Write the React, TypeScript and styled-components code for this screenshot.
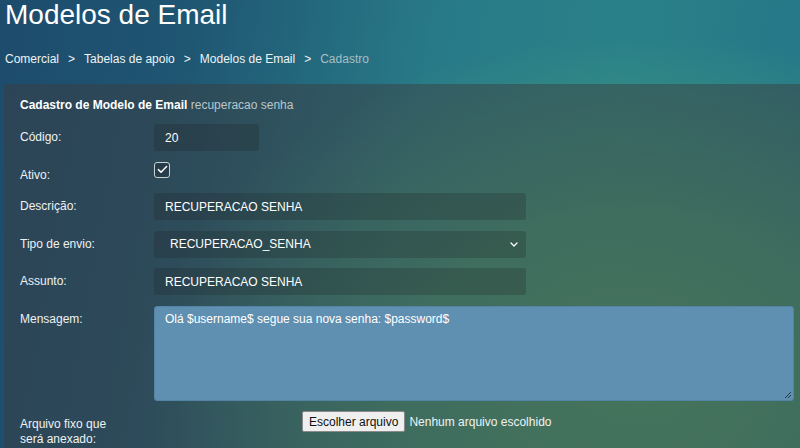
import styled, { createGlobalStyle } from "styled-components";

const GlobalStyle = createGlobalStyle`
  html, body {
    margin: 0;
    padding: 0;
    height: 100%;
    overflow: hidden;
  }
  body {
    font-family: "Liberation Sans", Arial, sans-serif;
    font-size: 12px;
    color: #eef2f3;
    background:
      radial-gradient(ellipse 62% 78% at 80% 86%, rgba(78, 168, 118, 1) 0%, rgba(78, 168, 118, 0.65) 50%, rgba(78, 168, 118, 0) 100%),
      linear-gradient(100deg, #1d4b6c 0%, #1f5672 22%, #287a88 50%, #2a8088 72%, #247689 100%);
  }
  #root {
    min-height: 100vh;
  }
`;

const Page = styled.div`
  padding: 0 0 0 4px;
`;

const Title = styled.h1`
  margin: 0 0 0 1px;
  font-size: 28px;
  font-weight: 400;
  line-height: 30px;
  color: #ffffff;
`;

const Breadcrumb = styled.nav`
  display: flex;
  align-items: center;
  margin: 22px 0 0 1px;
  line-height: 14px;
  font-size: 12px;
`;

const Crumb = styled.span<{ $current?: boolean }>`
  color: ${({ $current }) => ($current ? "#a7bfc4" : "#eef3f4")};
`;

const Sep = styled.span`
  margin: 0 9px;
  color: #eef3f4;
`;

const Panel = styled.section`
  margin-top: 18px;
  padding: 14px 6px 20px 16px;
  background: rgba(60, 60, 62, 0.48);
  min-height: 400px;
`;

const PanelHeader = styled.div`
  line-height: 14px;
  margin-bottom: 12px;
  strong {
    font-weight: 700;
    color: #ffffff;
  }
  span {
    color: #b9c7cb;
  }
`;

const Form = styled.div`
  display: grid;
  grid-template-columns: 134px 1fr;
  row-gap: 10.5px;
  align-items: start;
`;

const Label = styled.label`
  padding: 6px 0 0;
  line-height: 15px;
  color: #eef2f3;
`;

const Field = styled.div`
  display: flex;
  align-items: flex-start;
`;

const TextInput = styled.input<{ $width: number }>`
  box-sizing: border-box;
  width: ${({ $width }) => $width}px;
  height: 27px;
  padding: 0 11px;
  border: none;
  border-radius: 3px;
  background: rgba(30, 32, 32, 0.24);
  color: #ffffff;
  font-family: inherit;
  font-size: 12px;
  outline: none;
`;

const SelectBox = styled.div`
  box-sizing: border-box;
  width: 372px;
  height: 27px;
  padding: 0 8px 0 16px;
  border-radius: 3px;
  background: rgba(30, 32, 32, 0.24);
  display: flex;
  align-items: center;
  justify-content: space-between;
  color: #ffffff;
`;

const CheckBox = styled.span`
  box-sizing: border-box;
  width: 16px;
  height: 16px;
  border: 1px solid #c9d3d6;
  border-radius: 3px;
  background: rgba(30, 40, 45, 0.35);
  display: flex;
  align-items: center;
  justify-content: center;
`;

const TextArea = styled.div`
  position: relative;
  box-sizing: border-box;
  flex: 1;
  height: 95px;
  padding: 5px 10px;
  line-height: 14px;
  background: #5f8fb1;
  border: 1px solid #5383a5;
  border-radius: 3px;
  color: #ffffff;
`;

const Grip = styled.svg`
  position: absolute;
  right: 1px;
  bottom: 1px;
`;

const FileField = styled.div`
  display: flex;
  align-items: center;
  gap: 4px;
  padding-left: 148px;
`;

const FileButton = styled.button`
  height: 21px;
  padding: 0 6px;
  border: 1px solid #8a8a8a;
  border-radius: 2px;
  background: #efefef;
  color: #111111;
  font-family: inherit;
  font-size: 12px;
`;

const FileName = styled.span`
  color: #eef2f3;
`;

export default function App() {
  return (
    <>
      <GlobalStyle />
      <Page>
        <Title>Modelos de Email</Title>
        <Breadcrumb>
          <Crumb>Comercial</Crumb>
          <Sep>&gt;</Sep>
          <Crumb>Tabelas de apoio</Crumb>
          <Sep>&gt;</Sep>
          <Crumb>Modelos de Email</Crumb>
          <Sep>&gt;</Sep>
          <Crumb $current>Cadastro</Crumb>
        </Breadcrumb>
        <Panel>
          <PanelHeader>
            <strong>Cadastro de Modelo de Email</strong> <span>recuperacao senha</span>
          </PanelHeader>
          <Form>
            <Label>Código:</Label>
            <Field>
              <TextInput $width={105} defaultValue="20" />
            </Field>

            <Label>Ativo:</Label>
            <Field>
              <CheckBox>
                <svg width="11" height="9" viewBox="0 0 11 9">
                  <path d="M1.4 4.6 L4 7.2 L9.6 1.5" fill="none" stroke="#ffffff" strokeWidth="1.5" strokeLinecap="round" strokeLinejoin="round" />
                </svg>
              </CheckBox>
            </Field>

            <Label>Descrição:</Label>
            <Field>
              <TextInput $width={372} defaultValue="RECUPERACAO SENHA" />
            </Field>

            <Label>Tipo de envio:</Label>
            <Field>
              <SelectBox>
                <span>RECUPERACAO_SENHA</span>
                <svg width="8" height="5" viewBox="0 0 8 5">
                  <path d="M1 1 L4 4 L7 1" fill="none" stroke="#ffffff" strokeWidth="1.3" strokeLinecap="round" strokeLinejoin="round" />
                </svg>
              </SelectBox>
            </Field>

            <Label>Assunto:</Label>
            <Field>
              <TextInput $width={372} defaultValue="RECUPERACAO SENHA" />
            </Field>

            <Label>Mensagem:</Label>
            <Field>
              <TextArea>
                Olá $username$ segue sua nova senha: $password$
                <Grip width="8" height="8" viewBox="0 0 8 8">
                  <path d="M7 1 L1 7 M7 4 L4 7" stroke="#2b3b44" strokeWidth="1" />
                </Grip>
              </TextArea>
            </Field>

            <Label>
              Arquivo fixo que
              <br />
              será anexado:
            </Label>
            <Field>
              <FileField>
                <FileButton>Escolher arquivo</FileButton>
                <FileName>Nenhum arquivo escolhido</FileName>
              </FileField>
            </Field>
          </Form>
        </Panel>
      </Page>
    </>
  );
}
